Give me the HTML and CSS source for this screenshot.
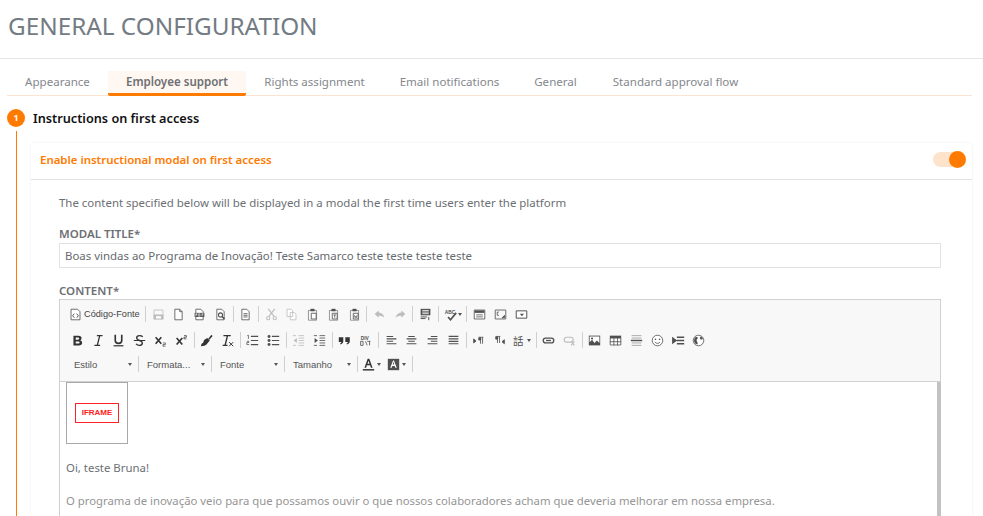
FILE: index.html
```html
<!DOCTYPE html>
<html lang="en">
<head>
<meta charset="utf-8">
<title>General configuration</title>
<link rel="stylesheet" href="styles.css">
</head>
<body>
<svg class="defs" width="0" height="0" aria-hidden="true">
  <symbol id="doc" viewBox="0 0 16 16"><path d="M3.5 1.5h6l3 3v10h-9z" fill="#fff" stroke="currentColor"/><path d="M9.5 1.5v3h3" fill="none" stroke="currentColor"/></symbol>
  <symbol id="src" viewBox="0 0 16 16"><path d="M2.5 1.5h8l3 3v10h-11z" fill="#fff" stroke="currentColor"/><path d="M6.5 7 4.5 9.5l2 2.5M9.5 7l2 2.5-2 2.5" fill="none" stroke="currentColor" stroke-width="1.2"/></symbol>
  <symbol id="save" viewBox="0 0 16 16"><path d="M2.5 2.5h11v11h-11z" fill="none" stroke="currentColor"/><path d="M2 8h12v6H2z" fill="currentColor"/><path d="M5 10h6v3H5z" fill="#fff"/></symbol>
  <symbol id="pdf" viewBox="0 0 16 16"><path d="M3.5 1.5h6l3 3v10h-9z" fill="#fff" stroke="currentColor"/><path d="M2 6h12v5H2z" fill="currentColor"/><path d="M3.500 7v3M3.500 7h1.500v1.500H3.500M7 7v3h1.500V7zM11 7v3M11 7h2M11 8.500h1.500" fill="none" stroke="#fff" stroke-width=".7"/></symbol>
  <symbol id="preview" viewBox="0 0 16 16"><path d="M3.500 1.500h6l3 3v10h-9z" fill="#fff" stroke="currentColor"/><circle cx="8" cy="8.500" r="2.500" fill="none" stroke="currentColor" stroke-width="1.300"/><path d="m9.800 10.500 3 3" stroke="currentColor" stroke-width="2"/></symbol>
  <symbol id="tpl" viewBox="0 0 16 16"><path d="M3.500 1.500h6l3 3v10h-9z" fill="#fff" stroke="currentColor"/><path d="M5.500 7h5M5.500 9h5M5.500 11h5" stroke="currentColor"/></symbol>
  <symbol id="cut" viewBox="0 0 16 16"><path d="m4 1 7 9M12 1l-7 9" stroke="currentColor" stroke-width="1.500"/><circle cx="4" cy="12.500" r="2" fill="none" stroke="currentColor" stroke-width="1.300"/><circle cx="12" cy="12.500" r="2" fill="none" stroke="currentColor" stroke-width="1.300"/></symbol>
  <symbol id="copy" viewBox="0 0 16 16"><path d="M2.500 1.500h5l2 2v7h-7zM6.500 5.500h5l2 2v7h-7z" fill="#fff" stroke="currentColor"/></symbol>
  <symbol id="paste" viewBox="0 0 16 16"><path d="M3 3h10v12H3z" fill="none" stroke="currentColor" stroke-opacity=".7"/><path d="M5.500 1h5v3h-5z" fill="currentColor"/><path d="M6.500 6.500h6v7h-6z" fill="#fff" stroke="currentColor"/></symbol>
  <symbol id="pastet" viewBox="0 0 16 16"><path d="M3 3h10v12H3z" fill="none" stroke="currentColor" stroke-opacity=".7"/><path d="M5.500 1h5v3h-5z" fill="currentColor"/><path d="M6.500 6.500h6v7h-6z" fill="#fff" stroke="currentColor"/><path d="M8 8.500h3M9.500 8.500v3.500" stroke="currentColor"/></symbol>
  <symbol id="pastew" viewBox="0 0 16 16"><path d="M3 3h10v12H3z" fill="none" stroke="currentColor" stroke-opacity=".7"/><path d="M5.500 1h5v3h-5z" fill="currentColor"/><path d="M6.500 6.500h6v7h-6z" fill="#fff" stroke="currentColor"/><path d="m7.800 8.500.9 3.500.8-2 .8 2 .9-3.500" fill="none" stroke="currentColor" stroke-width=".8"/></symbol>
  <symbol id="undo" viewBox="0 0 16 16"><path d="M7 3 2 7.500 7 12V9.500c3 0 5 .5 7 2.500-.5-3.500-3-6-7-6.500z" fill="currentColor"/></symbol>
  <symbol id="redo" viewBox="0 0 16 16"><path d="m9 3 5 4.500L9 12V9.500c-3 0-5 .5-7 2.500.5-3.500 3-6 7-6.500z" fill="currentColor"/></symbol>
  <symbol id="find" viewBox="0 0 16 16"><path d="M2 1h12v8H2z" fill="currentColor"/><path d="M4 3h8M4 5h8M4 7h8" stroke="#fff"/><path d="M2 11h8M2 13h6M12 11v4" stroke="currentColor" stroke-width="1.200"/></symbol>
  <symbol id="form" viewBox="0 0 16 16"><path d="M1.500 2.500h13v11h-13z" fill="none" stroke="currentColor"/><path d="M2 3h12v3H2z" fill="currentColor"/><path d="M4 8h8v1H4zM4 10.500h8v1H4z" fill="currentColor"/></symbol>
  <symbol id="frame" viewBox="0 0 16 16"><path d="M1.500 2.500h13v11h-13z" fill="none" stroke="currentColor"/><path d="M4 5h2M4 5v4M4 9h2M10 12l3-3v3z" stroke="currentColor" fill="currentColor"/></symbol>
  <symbol id="select" viewBox="0 0 16 16"><path d="M1.500 3.500h13v9h-13z" fill="#fff" stroke="currentColor" stroke-width="1.200"/><path d="m6 7 2.500 3L11 7z" fill="currentColor"/></symbol>
  <symbol id="brush" viewBox="0 0 16 16"><path d="m9 5 3 3-4 5-2.500 1.500L1 15l1-3 2-1.500 1-3z" fill="currentColor"/><path d="m10 6 4-5 1.500 1.500L11.500 7z" fill="currentColor"/></symbol>
  <symbol id="ol" viewBox="0 0 16 16"><path d="M6 3h9M6 8h9M6 13h9" stroke="currentColor" stroke-width="1.400"/><path d="M1.500 2 3 1.500V6M1 9h2.500v1.500H1V13h3" fill="none" stroke="currentColor" stroke-width=".9"/></symbol>
  <symbol id="ul" viewBox="0 0 16 16"><path d="M6 3h9M6 8h9M6 13h9" stroke="currentColor" stroke-width="1.400"/><circle cx="2.500" cy="3" r="1.800" fill="currentColor"/><circle cx="2.500" cy="8" r="1.800" fill="currentColor"/><circle cx="2.500" cy="13" r="1.800" fill="currentColor"/></symbol>
  <symbol id="outd" viewBox="0 0 16 16"><path d="M8 2h7M8 5h7M8 8h7M8 11h7M8 14h7M1 2h4M1 14h4" stroke="currentColor"/><path d="M6 5v6L2 8z" fill="currentColor"/></symbol>
  <symbol id="ind" viewBox="0 0 16 16"><path d="M8 2h7M8 5h7M8 8h7M8 11h7M8 14h7M1 2h4M1 14h4" stroke="currentColor"/><path d="M2 5v6l4-3z" fill="currentColor"/></symbol>
  <symbol id="quote" viewBox="0 0 16 16"><path d="M1 4h5.500v5c0 2-1.500 3.500-3.500 4l-.5-1.300c1-.4 1.500-1 1.500-2H1zM9 4h5.500v5c0 2-1.500 3.500-3.500 4l-.5-1.300c1-.4 1.500-1 1.500-2H9z" fill="currentColor"/></symbol>
  <symbol id="al" viewBox="0 0 16 16"><path d="M2 3h8M2 6h12M2 9h8M2 12h12" stroke="currentColor" stroke-width="1.300"/></symbol>
  <symbol id="ac" viewBox="0 0 16 16"><path d="M4 3h8M2 6h12M4 9h8M2 12h12" stroke="currentColor" stroke-width="1.300"/></symbol>
  <symbol id="ar" viewBox="0 0 16 16"><path d="M6 3h8M2 6h12M6 9h8M2 12h12" stroke="currentColor" stroke-width="1.300"/></symbol>
  <symbol id="aj" viewBox="0 0 16 16"><path d="M2 3h12M2 6h12M2 9h12M2 12h12" stroke="currentColor" stroke-width="1.400"/></symbol>
  <symbol id="ltr" viewBox="0 0 16 16"><path d="M2 6v5l3-2.500zM8 4h6M10.500 4v8M13 4v8" fill="currentColor" stroke="currentColor"/><circle cx="9.500" cy="6" r="2" fill="currentColor"/></symbol>
  <symbol id="rtl" viewBox="0 0 16 16"><path d="M14 7v5l-3-2.500zM3 3h6M5.500 3v8M8 3v8" fill="currentColor" stroke="currentColor"/><circle cx="4.500" cy="5" r="2" fill="currentColor"/></symbol>
  <symbol id="link" viewBox="0 0 16 16"><rect x="1.500" y="5" width="13" height="6" rx="3" fill="none" stroke="currentColor" stroke-width="1.600"/><path d="M5 8h6" stroke="currentColor" stroke-width="1.600"/></symbol>
  <symbol id="unlink" viewBox="0 0 16 16"><rect x="1.500" y="4" width="11" height="6" rx="3" fill="none" stroke="currentColor" stroke-width="1.400"/><path d="m10 9 4 5M14 9l-4 5" stroke="currentColor" stroke-width="1.300"/></symbol>
  <symbol id="image" viewBox="0 0 16 16"><path d="M1 2h14v12H1z" fill="currentColor"/><path d="M2 3h12v8l-3-3-3 3-3-4-3 3z" fill="#fff"/><circle cx="5" cy="5.500" r="1.300" fill="currentColor"/></symbol>
  <symbol id="table" viewBox="0 0 16 16"><path d="M1 2h14v12H1z" fill="#fff" stroke="none"/><path d="M1 2h14v3.500H1z" fill="currentColor"/><path d="M1.500 5v8.500h13V5M6 5v9M10.500 5v9M1 9.500h14" fill="none" stroke="currentColor"/></symbol>
  <symbol id="hr" viewBox="0 0 16 16"><path d="M2 2h12M2 5h12M2 11h12M2 14h12" stroke="currentColor" stroke-opacity=".55"/><path d="M1 8h14" stroke="currentColor" stroke-width="1.800"/></symbol>
  <symbol id="smile" viewBox="0 0 16 16"><circle cx="8" cy="8" r="6.500" fill="#fff" stroke="currentColor"/><circle cx="5.500" cy="6.500" r="1" fill="currentColor"/><circle cx="10.500" cy="6.500" r="1" fill="currentColor"/><path d="M5 10c1.500 2 4.500 2 6 0" fill="none" stroke="currentColor"/></symbol>
  <symbol id="pb" viewBox="0 0 16 16"><path d="M1 5v6l4-3zM6 4h9M6 8h9M6 12h9" fill="currentColor" stroke="currentColor" stroke-width="1.700"/></symbol>
  <symbol id="globe" viewBox="0 0 16 16"><circle cx="8" cy="8" r="6.500" fill="#fff" stroke="currentColor"/><path d="M5 3.500c1.500 0 2.500 1 2 2S5 7 6 9s1.200 2.500.8 4C4 12.500 2.500 10.500 2.500 8c0-2 1-3.500 2.500-4.500zM10.500 3c1.500.5 2.500 1.800 3 3l-2.500 1L9.500 5z" fill="currentColor"/></symbol>
  <symbol id="bold" viewBox="0 0 16 16"><path d="M3 2h6c3 0 4 1.500 4 3s-.7 2.400-2 2.800c1.700.3 2.700 1.500 2.700 3.200 0 2-1.500 3-4 3H3zm2.800 2.300V7h2.600c1 0 1.700-.5 1.700-1.400s-.7-1.300-1.700-1.300zm0 4.900v2.500h3c1.100 0 1.800-.4 1.800-1.300s-.7-1.200-1.800-1.200z" fill="currentColor"/></symbol>
  <symbol id="ital" viewBox="0 0 16 16"><path d="M6 2h7M3 14h7M9.500 2l-3 12" fill="none" stroke="currentColor" stroke-width="1.600"/></symbol>
  <symbol id="under" viewBox="0 0 16 16"><path d="M4 1v7c0 2.500 1.500 3.500 4 3.500s4-1 4-3.500V1" fill="none" stroke="currentColor" stroke-width="2"/><path d="M2 14.500h12" stroke="currentColor" stroke-width="1.500"/></symbol>
  <symbol id="strike" viewBox="0 0 16 16"><path d="M12 3.500C11 2.500 9.500 2 8 2 6 2 4.500 3 4.500 5c0 3.500 7 2.500 7 6 0 2-1.500 3-3.500 3-1.800 0-3.200-.6-4.200-1.800" fill="none" stroke="currentColor" stroke-width="1.700"/><path d="M1 8h14" stroke="currentColor" stroke-width="1.300"/></symbol>
  <symbol id="sub" viewBox="0 0 16 16"><path d="m2 4 7 8M9 4l-7 8" stroke="currentColor" stroke-width="2"/><path d="M11 11h3v2h-3v2h3" fill="none" stroke="currentColor" stroke-width=".8"/></symbol>
  <symbol id="sup" viewBox="0 0 16 16"><path d="m2 5 7 8M9 5l-7 8" stroke="currentColor" stroke-width="2"/><path d="M11 2h3v2h-3v2h3" fill="none" stroke="currentColor" stroke-width=".9"/></symbol>
  <symbol id="rm" viewBox="0 0 16 16"><path d="M3 2h9M2 14h6M8 2 5 14" fill="none" stroke="currentColor" stroke-width="1.700"/><path d="m10 10 5 5M15 10l-5 5" stroke="currentColor" stroke-width="1.200"/></symbol>
  <symbol id="tcolor" viewBox="0 0 16 16"><path d="M3 12 7 1h2l4 11h-2l-1-3H6l-1 3zm3.700-5h2.600L8 3.500z" fill="currentColor"/><path d="M1 14.500h14" stroke="#444" stroke-width="2"/></symbol>
  <symbol id="bcolor" viewBox="0 0 16 16"><path d="M1 1h14v14H1z" fill="currentColor"/><path d="M4 12 7.500 3h1L12 12h-1.700l-.8-2.300h-3L5.700 12zm3-4h2L8 5z" fill="#fff"/></symbol>
</svg>

<main class="page">
  <h1 class="page-title">GENERAL CONFIGURATION</h1>

  <nav class="tabs">
    <a class="tab tab-a">Appearance</a>
    <a class="tab tab-b is-active">Employee support</a>
    <a class="tab tab-c">Rights assignment</a>
    <a class="tab tab-d">Email notifications</a>
    <a class="tab tab-e">General</a>
    <a class="tab tab-f">Standard approval flow</a>
  </nav>

  <header class="step-head">
    <span class="step-num">1</span>
    <h2 class="step-title">Instructions on first access</h2>
  </header>

  <section class="step-body">
    <div class="card">
      <div class="card-head">
        <span class="card-title">Enable instructional modal on first access</span>
        <span class="toggle"><span class="toggle-knob"></span></span>
      </div>
      <div class="card-body">
        <p class="hint">The content specified below will be displayed in a modal the first time users enter the platform</p>
        <label class="label label-title">MODAL TITLE*</label>
        <div class="input">Boas vindas ao Programa de Inovação! Teste Samarco teste teste teste teste</div>
        <label class="label label-content">CONTENT*</label>
        <div class="editor">
          <div class="toolbar">
            <div class="row row-first">
              <span class="btn btn-src"><svg class="ic dark"><use href="#src"/></svg><span class="btn-text">Código-Fonte</span></span><i class="sep"></i>
              <span class="btn"><svg class="ic off"><use href="#save"/></svg></span><span class="btn"><svg class="ic dark"><use href="#doc"/></svg></span><span class="btn"><svg class="ic dark"><use href="#pdf"/></svg></span><span class="btn"><svg class="ic dark"><use href="#preview"/></svg></span><i class="sep"></i>
              <span class="btn"><svg class="ic dark"><use href="#tpl"/></svg></span><i class="sep"></i>
              <span class="btn"><svg class="ic off"><use href="#cut"/></svg></span><span class="btn"><svg class="ic off"><use href="#copy"/></svg></span><span class="btn"><svg class="ic dark"><use href="#paste"/></svg></span><span class="btn"><svg class="ic dark"><use href="#pastet"/></svg></span><span class="btn"><svg class="ic dark"><use href="#pastew"/></svg></span><i class="sep"></i>
              <span class="btn"><svg class="ic off"><use href="#undo"/></svg></span><span class="btn"><svg class="ic off"><use href="#redo"/></svg></span><i class="sep"></i>
              <span class="btn"><svg class="ic dark"><use href="#find"/></svg></span><i class="sep"></i>
              <span class="btn btn-arrow"><svg class="ic dark" viewBox="0 0 16 16"><text x="1" y="7" class="tiny">ABC</text><path d="m5 11 3 3.500L15 6" fill="none" stroke="currentColor" stroke-width="2"/></svg><b class="caret"></b></span><i class="sep"></i>
              <span class="btn"><svg class="ic dark"><use href="#form"/></svg></span><span class="btn"><svg class="ic dark"><use href="#frame"/></svg></span><span class="btn"><svg class="ic dark"><use href="#select"/></svg></span>
            </div>
            <div class="row">
              <span class="btn"><svg class="ic black"><use href="#bold"/></svg></span><span class="btn"><svg class="ic black"><use href="#ital"/></svg></span><span class="btn"><svg class="ic black"><use href="#under"/></svg></span><span class="btn"><svg class="ic black"><use href="#strike"/></svg></span><span class="btn"><svg class="ic black"><use href="#sub"/></svg></span><span class="btn"><svg class="ic black"><use href="#sup"/></svg></span><i class="sep"></i>
              <span class="btn"><svg class="ic black"><use href="#brush"/></svg></span><span class="btn"><svg class="ic black"><use href="#rm"/></svg></span><i class="sep"></i>
              <span class="btn"><svg class="ic dark"><use href="#ol"/></svg></span><span class="btn"><svg class="ic dark"><use href="#ul"/></svg></span><i class="sep"></i>
              <span class="btn"><svg class="ic off"><use href="#outd"/></svg></span><span class="btn"><svg class="ic dark"><use href="#ind"/></svg></span><i class="sep"></i>
              <span class="btn"><svg class="ic black"><use href="#quote"/></svg></span><span class="btn"><svg class="ic dark" viewBox="0 0 16 16"><text x="2" y="7" class="tiny">DIV</text><path d="M2 9h3v5H2zM8 9l2 5M13 9v5M10 9h4" fill="none" stroke="currentColor"/></svg></span><i class="sep"></i>
              <span class="btn"><svg class="ic dark"><use href="#al"/></svg></span><span class="btn"><svg class="ic dark"><use href="#ac"/></svg></span><span class="btn"><svg class="ic dark"><use href="#ar"/></svg></span><span class="btn"><svg class="ic dark"><use href="#aj"/></svg></span><i class="sep"></i>
              <span class="btn"><svg class="ic dark"><use href="#ltr"/></svg></span><span class="btn"><svg class="ic dark"><use href="#rtl"/></svg></span><span class="btn btn-arrow"><svg class="ic dark" viewBox="0 0 16 16"><text x="0" y="13.500" class="cjk">話</text></svg><b class="caret"></b></span><i class="sep"></i>
              <span class="btn"><svg class="ic dark"><use href="#link"/></svg></span><span class="btn"><svg class="ic off"><use href="#unlink"/></svg></span><i class="sep"></i>
              <span class="btn"><svg class="ic dark"><use href="#image"/></svg></span><span class="btn"><svg class="ic dark"><use href="#table"/></svg></span><span class="btn"><svg class="ic dark"><use href="#hr"/></svg></span><span class="btn"><svg class="ic dark"><use href="#smile"/></svg></span><span class="btn"><svg class="ic dark"><use href="#pb"/></svg></span><span class="btn"><svg class="ic dark"><use href="#globe"/></svg></span>
            </div>
            <div class="row row-combo">
              <span class="combo">Estilo<b class="caret"></b></span><i class="sep"></i>
              <span class="combo">Formata...<b class="caret"></b></span><i class="sep"></i>
              <span class="combo">Fonte<b class="caret"></b></span><i class="sep"></i>
              <span class="combo">Tamanho<b class="caret"></b></span><i class="sep"></i>
              <span class="btn btn-color"><svg class="ic black"><use href="#tcolor"/></svg><b class="caret"></b></span><span class="btn btn-color"><svg class="ic dark"><use href="#bcolor"/></svg><b class="caret"></b></span><i class="sep"></i>
            </div>
          </div>
          <div class="editor-content">
            <div class="iframe-ph"><span class="iframe-tag">IFRAME</span></div>
            <p class="greet">Oi, teste Bruna!</p>
            <p class="para">O programa de inovação veio para que possamos ouvir o que nossos colaboradores acham que deveria melhorar em nossa empresa.</p>
          </div>
        </div>
      </div>
    </div>
  </section>
</main>
</body>
</html>
```
FILE: styles.css
```css
* { box-sizing: border-box; }
html, body { margin: 0; height: 516px; overflow: hidden; background: #fff; }
body { font-family: "Noto Sans", sans-serif; color: #6c6f73; }
.defs { position: absolute; }
.tiny { font: 700 6px "Liberation Sans", sans-serif; fill: currentColor; }
.cjk { font: 13px "Noto Sans CJK TC", sans-serif; fill: currentColor; }

.page { display: flex; flex-direction: column; height: 516px; }
.page-title {
  margin: 0; height: 59px; padding: 9px 0 0 8px;
  font-family: "Noto Sans", sans-serif; font-weight: 400; font-size: 24.300px; line-height: 34px;
  color: #737b83; border-bottom: 1px solid #e6e6e6;
}

.tabs {
  display: flex; height: 25px; margin: 12px 11px 0 7px;
  border-bottom: 1px solid #fbe4d2; font-size: 11.550px;
}
.tab { display: block; height: 25px; line-height: 22px; color: #84888d; text-align: center; }
.tab-a { width: 101px; }
.tab-b { width: 138px; font-weight: 600; color: #6c6f73; background: #fff7f2; border-bottom: 3px solid #ff7a00; border-radius: 0 0 2px 2px; }
.tab-c { width: 137px; }
.tab-d { width: 133px; }
.tab-e { width: 79px; }
.tab-f { width: 161px; }

.step-head { display: flex; align-items: center; gap: 8px; padding: 13px 0 0 7px; }
.step-num {
  width: 18px; height: 18px; border-radius: 50%; background: #ff7a00; color: #fff;
  font-size: 9px; font-weight: 700; line-height: 18px; text-align: center;
}
.step-title { margin: 0; font-size: 12.700px; font-weight: 600; line-height: 18px; color: #111; }

.step-body { margin: 4px 11px 0 16px; padding: 12px 0 0 14px; border-left: 1px solid #ff7a00; flex: 1; min-height: 0; }
.card { box-shadow: 0 0 3px rgba(0,0,0,.08); border-radius: 4px 4px 0 0; }
.card-head {
  display: flex; align-items: center; justify-content: space-between;
  height: 37px; padding: 0 6px 3px 9px; border-bottom: 1px solid #e3e3e3;
}
.card-title { font-size: 11.450px; font-weight: 600; color: #ff7a00; }
.toggle { display: flex; align-items: center; justify-content: flex-end; width: 33px; height: 15px; background: #fde3cc; border-radius: 8px; }
.toggle-knob { width: 17px; height: 17px; border-radius: 50%; background: #ff7a00; flex: none; }

.card-body { padding: 15px 31px 0 28px; }
.hint { margin: 0; font-size: 11.450px; line-height: 16px; color: #6c6f73; }
.label { display: block; font-size: 11.500px; font-weight: 600; line-height: 16px; color: #6c6f73; }
.label-title { margin-top: 15px; }
.label-content { margin-top: 15px; }
.input {
  height: 25px; margin-top: 1px; padding: 0 5px; border: 1px solid #e2e2e2;
  font-size: 11.450px; line-height: 23px; color: #666a6e;
}

.toolbar {
  height: 83px; padding: 1px 0 0 7px; background: #f8f8f8;
  border: 1px solid #d1d1d1;
}
.row { display: flex; align-items: center; height: 26px; }
.row-first { margin-left: -1px; }
.row-combo { height: 20px; margin: 1px 0 0 1px; }
.btn { display: flex; align-items: center; justify-content: center; flex: none; width: 20.800px; height: 20px; }
.btn-src { width: auto; gap: 2px; padding: 0 3.500px 0 0; margin-left: 3px; font: 9.200px "Liberation Sans", sans-serif; color: #444; }
.btn-text { white-space: nowrap; }
.btn-arrow { width: 24px; gap: 1px; justify-content: flex-start; padding-left: 3px; }
.btn-color { width: 25px; gap: 2px; justify-content: flex-start; padding-left: 2px; }
.ic { width: 13px; height: 13px; flex: none; }
.dark { color: #505050; }
.black { color: #333; }
.off { color: #bdbdbd; }
.sep { flex: none; width: 1px; height: 16px; margin: 0 1.750px; background: #cfcfcf; }
.caret { flex: none; width: 0; height: 0; border: 2.500px solid transparent; border-top: 3px solid #555; border-bottom: 0; }
.combo {
  display: flex; align-items: center; justify-content: space-between;
  flex: none; width: 65.500px; height: 20px; padding: 0 2px 0 6px; margin-right: 3px;
  font: 9.500px "Liberation Sans", sans-serif; color: #555;
}

.editor-content {
  height: 135px; padding: 0 0 0 6px;
  border-left: 1px solid #cfcfcf; border-right: 4px solid #c2c2c2; background: #fff;
}
.iframe-ph {
  display: flex; align-items: center; justify-content: center;
  width: 62px; height: 62px; border: 1px solid #a9a9a9;
}
.iframe-tag {
  display: block; width: 44px; height: 20px; border: 1px solid #f22;
  font: 700 8px/18px "Liberation Sans", sans-serif; color: #f22; text-align: center;
}
.greet { margin: 16px 0 0; font-size: 11.400px; line-height: 16px; color: #6c6f73; }
.para { margin: 17px 0 0; font-size: 11.340px; line-height: 16px; color: #959595; white-space: nowrap; }
```
